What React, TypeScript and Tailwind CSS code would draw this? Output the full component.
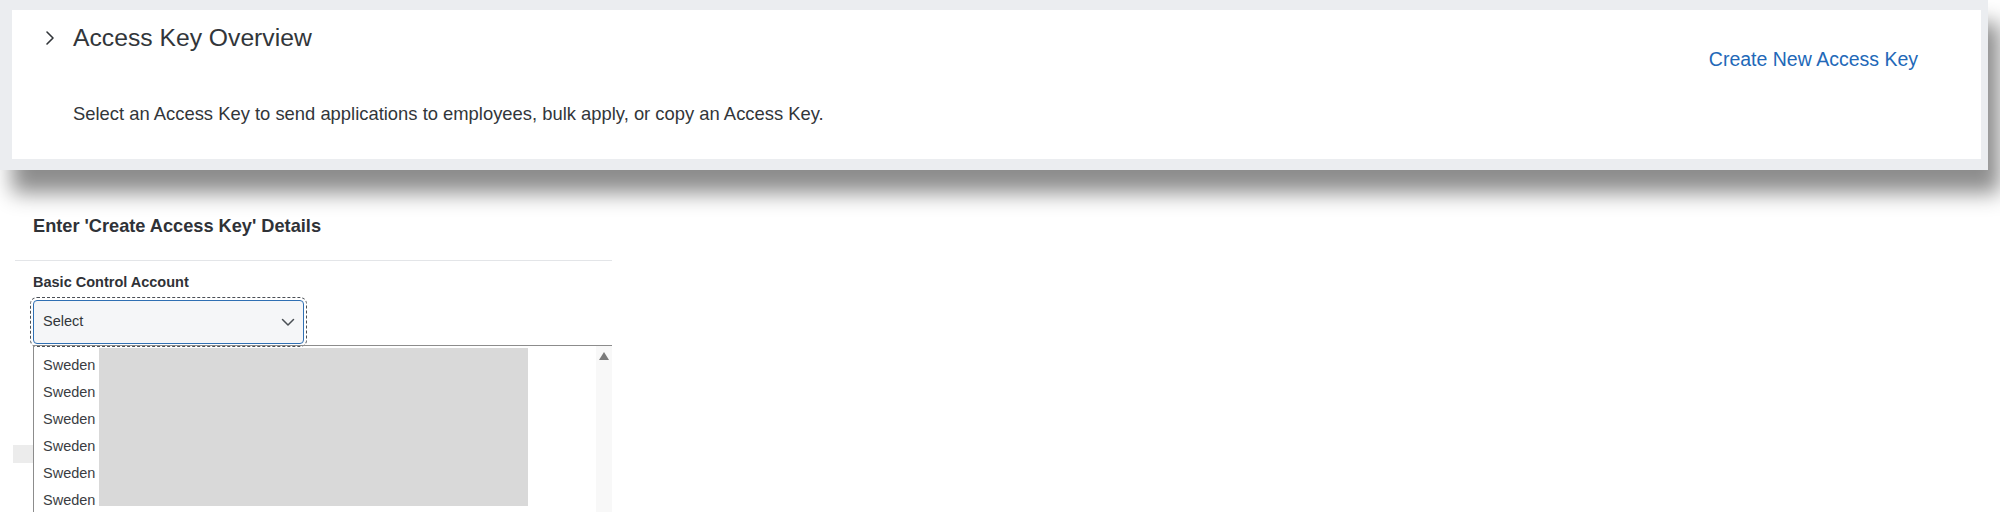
const rows = ["Sweden", "Sweden", "Sweden", "Sweden", "Sweden", "Sweden"];

function ChevronRight() {
    return (
        <svg width="12" height="18" viewBox="0 0 12 18" fill="none">
            <path d="M3 3l6 6-6 6" stroke="#32363a" strokeWidth="1.6" strokeLinecap="round" strokeLinejoin="round" />
        </svg>
    );
}

function ChevronDown() {
    return (
        <svg width="14" height="9" viewBox="0 0 14 9" fill="none">
            <path d="M1.5 1.5l5.5 5.5 5.5-5.5" stroke="#4a4f55" strokeWidth="1.5" strokeLinecap="round" strokeLinejoin="round" />
        </svg>
    );
}

export default function App() {
    return (
        <div className="w-[2000px] h-[526px] bg-white overflow-hidden font-['Liberation_Sans',Arial,sans-serif] text-[#32363a]">
            {/* Overview panel */}
            <div className="w-[1988px] h-[170px] bg-[#ebedf0] pt-[10px] pl-[12px] pr-[7px] pb-[11px] shadow-[12px_23px_20px_rgba(0,0,0,0.45)]">
                <div className="h-full bg-white flex justify-between">
                    <div className="pl-[32px] pt-[12px]">
                        <div className="flex items-center h-[32px]">
                            <ChevronRight />
                            <h2 className="ml-[17px] text-[24.7px] leading-[32px]">Access Key Overview</h2>
                        </div>
                        <p className="mt-[48px] ml-[29px] text-[18.4px] leading-[24px]">
                            Select an Access Key to send applications to employees, bulk apply, or copy an Access Key.
                        </p>
                    </div>
                    <div className="pt-[37px] pr-[63px]">
                        <a className="text-[19.5px] leading-[24px] text-[#2268b8]">Create New Access Key</a>
                    </div>
                </div>
            </div>

            {/* Create access key form */}
            <div className="relative mt-[44px] ml-[15px] w-[597px]">
                <h3 className="pl-[18px] text-[18.2px] leading-[24px] font-bold text-[#2f3237]">Enter 'Create Access Key' Details</h3>
                <div className="mt-[22px] h-[1px] bg-[#e3e5e8]" />
                <div className="pl-[18px] pt-[11px]">
                    <label className="block text-[14.5px] leading-[20px] font-bold text-[#2f3237]">Basic Control Account</label>
                    <div className="mt-[8px] w-[271px] h-[44px] rounded-[4px] border border-[#2f6fb3] bg-[#f5f6f8] outline-1 outline-dashed outline-[#4a4f55] outline-offset-[2px] flex items-center justify-between pl-[9px] pr-[8px]">
                        <span className="text-[14.5px]">Select</span>
                        <ChevronDown />
                    </div>
                </div>
                <div className="absolute left-[-2px] top-[231px] w-[20px] h-[18px] bg-[#ececec]" />
                <div className="relative ml-[18px] mt-[1px] h-[167px] border-t border-l border-[#8c8c8c] flex">
                    <ul className="flex-1 pt-[6px] pl-[9px]">
                        {rows.map((r, i) => (
                            <li key={i} className="h-[27px] leading-[27px] text-[14.5px] text-[#3a3d42]">{r}</li>
                        ))}
                    </ul>
                    <div className="w-[16px] bg-[#f8f8f8] flex justify-center pt-[6px]">
                        <div className="w-0 h-0 border-l-[5px] border-r-[5px] border-b-[8px] border-l-transparent border-r-transparent border-b-[#7a7a7a]" />
                    </div>
                    <div className="absolute left-[65px] top-[2px] w-[429px] h-[158px] bg-[#d9d9d9]" />
                </div>
            </div>
        </div>
    );
}
